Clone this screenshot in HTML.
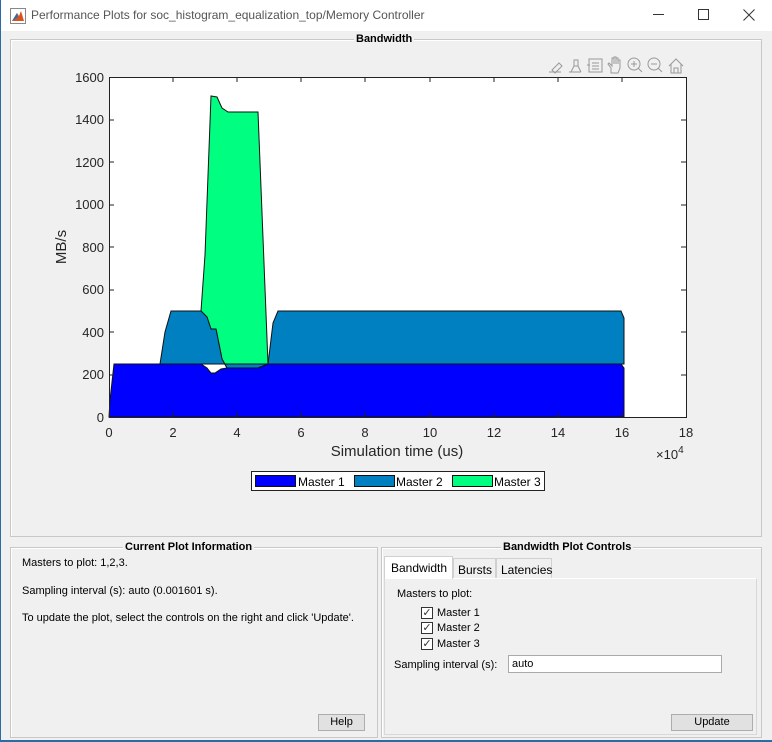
<!DOCTYPE html>
<html><head><meta charset="utf-8"><style>
*{margin:0;padding:0;box-sizing:border-box}
body{width:772px;height:742px;background:#f0f0f0;font-family:"Liberation Sans",sans-serif;position:relative;overflow:hidden;font-size:11px;color:#000}
.title{position:absolute;left:0;top:0;width:772px;height:31px;background:#fff;border-left:1px solid #2b6ca8;}
.title .t{position:absolute;left:30px;top:8px;font-size:12px;color:#555}
.panel{position:absolute;border:1px solid #c8c8c8;box-shadow:inset 1px 1px 0 #fff}
.lbl{position:absolute;background:#f0f0f0;font-weight:bold;font-size:11px;padding:0 2px;top:-7px}
.a{position:absolute;white-space:nowrap}
.btn{position:absolute;background:#e1e1e1;border:1px solid #adadad;text-align:center;font-size:11px;line-height:15px}
.cb{position:absolute;width:12px;height:12px;border:1px solid #333;background:#fff;font-size:11px;line-height:10px;text-align:center;color:#333}
</style></head><body>
<div style="position:absolute;left:0;top:0;width:1px;height:742px;background:#2b6ca8"></div>
<div style="position:absolute;left:0;top:740px;width:772px;height:2px;background:#2b6ca8"></div>
<div class="title">
<svg style="position:absolute;left:9px;top:8px" width="16" height="16"><rect x="0.5" y="0.5" width="15" height="15" fill="#fff" stroke="#888"/><path d="M2 13 L7 5 L9 8 L11 3 L14 13 Z" fill="#d9531e"/><path d="M2 13 L7 5 L8 9 Z" fill="#2a6fb5"/></svg>
<div class="t">Performance Plots for soc_histogram_equalization_top/Memory Controller</div>
<div class="a" style="left:652px;top:14px;width:11px;height:1px;background:#333"></div>
<div class="a" style="left:697px;top:9px;width:11px;height:11px;border:1px solid #333"></div>
<svg style="position:absolute;left:742px;top:9px" width="12" height="12"><path d="M0.5 0.5L11.5 11.5M11.5 0.5L0.5 11.5" stroke="#333"/></svg>
</div>
<div class="panel" style="left:10px;top:39px;width:752px;height:498px"><div class="lbl" style="left:343px">Bandwidth</div></div>
<svg style="position:absolute;left:0;top:0" width="772" height="540" font-family="Liberation Sans, sans-serif">
<g fill="none" stroke="#999" stroke-width="1">
<path d="M549 72h12M552 70l7-7 3 3-7 7z"/>
<path d="M569 72h12M571 72l3-6h4l3 6M574 66v-6h4v6"/>
<rect x="589" y="59" width="13" height="13"/><path d="M592 63h7M592 66h7M592 69h7M587 65h3"/>
<path d="M611 73v-5l-3-4 1-1 3 3v-8h2v6v-7h2v7v-6h2v6v-4h2v8l-2 5z"/>
<circle cx="634" cy="64" r="6"/><path d="M638 68l4 4M631 64h6M634 61v6"/>
<circle cx="654" cy="64" r="6"/><path d="M658 68l4 4M651 64h6"/>
<path d="M669 66l7-7 7 7M671 64v9h10v-9M674 73v-5h4v5"/>
</g>
<rect x="109" y="77" width="577" height="340" fill="#fff"/>
<polygon fill="#00ff80" stroke="#111" stroke-width="1" points="201,311 205,255 211,96 217,97 222,108 228,112 258,112 268,364 227,368 222,359 216,329 211,329 207,317"/>
<polygon fill="#0080c0" stroke="#111" stroke-width="1" points="160,364 165,332 171,311 201,311 207,317 211,329 216,329 222,359 227,368 258,368 268,364 273,323 278,311 621,311 624,318 624,364"/>
<polygon fill="#0000ff" stroke="#111" stroke-width="1" points="109,417 110,400 114,364 201,364 207,368 211,373 215,373 221,369 227,368 258,368 268,364 621,364 624,368 624,417"/>
<rect x="109.5" y="77.5" width="577" height="340" fill="none" stroke="#222"/>
<g stroke="#222">
<path d="M109 120h5M109 162h5M109 205h5M109 247h5M109 290h5M109 332h5M109 375h5M686 120h-5M686 162h-5M686 205h-5M686 247h-5M686 290h-5M686 332h-5M686 375h-5"/>
<path d="M173 417v-5M237 417v-5M301 417v-5M365 417v-5M430 417v-5M494 417v-5M558 417v-5M622 417v-5M173 77v5M237 77v5M301 77v5M365 77v5M430 77v5M494 77v5M558 77v5M622 77v5"/>
</g>
<g font-size="13" fill="#262626" text-anchor="end">
<text x="104" y="82">1600</text><text x="104" y="124">1400</text><text x="104" y="167">1200</text><text x="104" y="209">1000</text><text x="104" y="252">800</text><text x="104" y="294">600</text><text x="104" y="337">400</text><text x="104" y="379">200</text><text x="104" y="422">0</text>
</g>
<g font-size="13" fill="#262626" text-anchor="middle">
<text x="109" y="437">0</text><text x="173" y="437">2</text><text x="237" y="437">4</text><text x="301" y="437">6</text><text x="365" y="437">8</text><text x="430" y="437">10</text><text x="494" y="437">12</text><text x="558" y="437">14</text><text x="622" y="437">16</text><text x="686" y="437">18</text>
</g>
<text x="397" y="456" font-size="15" fill="#262626" text-anchor="middle">Simulation time (us)</text>
<text x="656" y="459" font-size="13" fill="#262626">×10<tspan font-size="10" dy="-6">4</tspan></text>
<text transform="translate(66 247) rotate(-90)" font-size="15" fill="#262626" text-anchor="middle">MB/s</text>
<rect x="251.5" y="471.5" width="293" height="19" fill="#fff" stroke="#222"/>
<rect x="255.5" y="475.5" width="40" height="11" fill="#0000ff" stroke="#111"/>
<rect x="354.5" y="475.5" width="40" height="11" fill="#0080c0" stroke="#111"/>
<rect x="452.5" y="475.5" width="40" height="11" fill="#00ff80" stroke="#111"/>
<g font-size="12" fill="#000"><text x="298" y="486">Master 1</text><text x="396" y="486">Master 2</text><text x="494" y="486">Master 3</text></g>
</svg>
<div class="panel" style="left:10px;top:547px;width:368px;height:191px"><div class="lbl" style="left:112px">Current Plot Information</div></div>
<div class="a" style="left:22px;top:557px">Masters to plot: 1,2,3.</div>
<div class="a" style="left:22px;top:585px">Sampling interval (s): auto (0.001601 s).</div>
<div class="a" style="left:22px;top:612px">To update the plot, select the controls on the right and click 'Update'.</div>
<div class="btn" style="left:318px;top:714px;width:47px;height:17px">Help</div>
<div class="panel" style="left:381px;top:547px;width:381px;height:191px"><div class="lbl" style="left:119px">Bandwidth Plot Controls</div></div>
<div class="a" style="left:384px;top:578px;width:373px;height:157px;border:1px solid #d8d8d8;border-top:1px solid #fff"></div>
<div class="a" style="left:384px;top:556px;width:69px;height:23px;background:#fff;border:1px solid #d0d0d0;border-bottom:none;padding:4px 0 0 6px;font-size:12px">Bandwidth</div>
<div class="a" style="left:453px;top:558px;width:43px;height:20px;border:1px solid #d0d0d0;border-bottom:none;padding:4px 0 0 4px;font-size:12px">Bursts</div>
<div class="a" style="left:496px;top:558px;width:56px;height:20px;border:1px solid #d0d0d0;border-bottom:none;padding:4px 0 0 4px;font-size:12px">Latencies</div>
<div class="a" style="left:397px;top:588px">Masters to plot:</div>
<div class="cb" style="left:421px;top:607px">✓</div><div class="a" style="left:437px;top:607px">Master 1</div>
<div class="cb" style="left:421px;top:622px">✓</div><div class="a" style="left:437px;top:622px">Master 2</div>
<div class="cb" style="left:421px;top:638px">✓</div><div class="a" style="left:437px;top:638px">Master 3</div>
<div class="a" style="left:394px;top:659px">Sampling interval (s):</div>
<div class="a" style="left:508px;top:655px;width:214px;height:18px;background:#fff;border:1px solid #aaa;padding:2px 3px">auto</div>
<div class="btn" style="left:671px;top:714px;width:82px;height:17px">Update</div>
</body></html>
